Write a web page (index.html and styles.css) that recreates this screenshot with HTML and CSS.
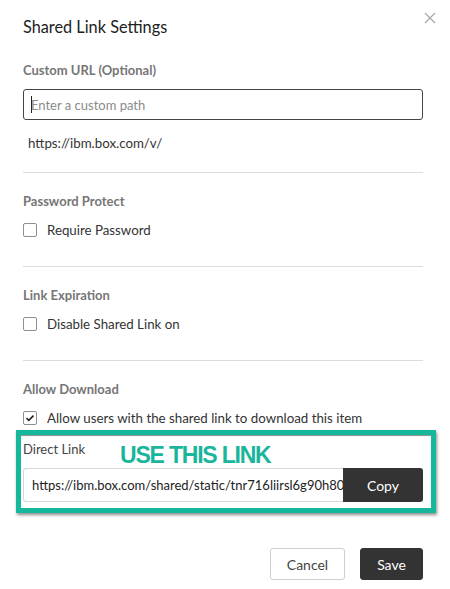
FILE: index.html
```html
<!DOCTYPE html>
<html>
<head>
<meta charset="utf-8">
<link rel="stylesheet" href="styles.css">
</head>
<body>
<div class="dialog">
  <h1 class="title">Shared Link Settings</h1>
  <button class="close" aria-label="Close">
    <svg width="12" height="12" viewBox="0 0 12 12"><path d="M1 1 L11 11 M11 1 L1 11" stroke="#a8a8a8" stroke-width="1.3" fill="none"/></svg>
  </button>

  <section class="section first">
    <div class="label">Custom URL (Optional)</div>
    <div class="text-input focused"><span class="caret"></span><span class="placeholder">Enter a custom path</span></div>
    <div class="prefix">https://ibm.box.com/v/</div>
  </section>

  <section class="section">
    <div class="label">Password Protect</div>
    <label class="check"><span class="box"></span><span>Require Password</span></label>
  </section>

  <section class="section">
    <div class="label">Link Expiration</div>
    <label class="check"><span class="box"></span><span>Disable Shared Link on</span></label>
  </section>

  <section class="section last">
    <div class="label">Allow Download</div>
    <label class="check"><span class="box checked"><svg width="10" height="8" viewBox="0 0 10 8"><path d="M1.5 4.2 L3.8 6.3 L8.5 1.6" stroke="#222" stroke-width="1.6" fill="none"/></svg></span><span>Allow users with the shared link to download this item</span></label>
  </section>

  <div class="highlight">
    <div class="direct-head">
      <span class="direct-label">Direct Link</span>
      <span class="callout">USE THIS LINK</span>
    </div>
    <div class="copy-row">
      <div class="link-field">https://ibm.box.com/shared/static/tnr716liirsl6g90h80</div>
      <button class="copy">Copy</button>
    </div>
  </div>

  <div class="footer">
    <button class="btn secondary">Cancel</button>
    <button class="btn primary">Save</button>
  </div>
</div>
</body>
</html>
```

FILE: styles.css
```css
* { box-sizing: border-box; }
html, body { margin: 0; padding: 0; background: #fff; }
body { font-family: Lato, "Open Sans", "Liberation Sans", sans-serif; color: #222; }

.dialog {
  position: relative;
  width: 450px;
  height: 589px;
  padding: 16px 27px 0 23px;
  overflow: hidden;
}

.title {
  margin: 0;
  font-size: 16.3px;
  line-height: 22px;
  font-weight: 400;
  color: #222;
}

.close {
  position: absolute;
  top: 12px;
  left: 424px;
  width: 12px;
  height: 12px;
  padding: 0;
  border: 0;
  background: none;
  display: flex;
}

.section {
  border-bottom: 1px solid #dcdcdc;
  padding-top: 20px;
  padding-bottom: 27px;
}
.section.first { padding-top: 24px; padding-bottom: 20px; }
.section.last { border-bottom: 0; padding-bottom: 0; }

.label {
  font-size: 13px;
  line-height: 16px;
  font-weight: 700;
  color: #767676;
}

.text-input {
  margin-top: 11px;
  height: 31px;
  border: 1px solid #444;
  border-radius: 3px;
  display: flex;
  align-items: center;
  padding-left: 7px;
  font-size: 13px;
  color: #8a8a8a;
}
.caret { width: 1px; height: 17px; background: #222; margin-right: -1px; }

.prefix {
  margin-top: 14px;
  padding-left: 5px;
  font-size: 13.3px;
  line-height: 18px;
  color: #333;
}

.check {
  margin-top: 12px;
  display: flex;
  align-items: center;
  gap: 10px;
  font-size: 13.3px;
  line-height: 18px;
  color: #333;
}
.box {
  width: 14px;
  height: 14px;
  border: 1px solid #8f8f8f;
  border-radius: 2px;
  display: flex;
  align-items: center;
  justify-content: center;
  flex: none;
}

.highlight {
  margin: 3px -13px 0 -7px;
  border: 5px solid #16b89c;
  padding: 6px 8px 6px 2px;
  box-shadow: 1px 2px 3px rgba(0,0,0,0.45), inset 0 2px 1px -1px rgba(0,0,0,0.45);
}

.direct-head {
  display: flex;
  align-items: flex-start;
  height: 27px;
}
.direct-label {
  font-size: 13px;
  line-height: 16px;
  color: #444;
  width: 97px;
}
.callout {
  font-family: "Liberation Sans", Arial, sans-serif;
  font-weight: 700;
  font-size: 23px;
  line-height: 26px;
  letter-spacing: -1.2px;
  color: #19b69c;
  margin-top: 1px;
}

.copy-row { display: flex; height: 34px; }
.link-field {
  flex: 1;
  min-width: 0;
  border: 1px solid #d8d8d8;
  border-right: 0;
  border-radius: 3px 0 0 3px;
  display: flex;
  align-items: center;
  padding-left: 8px;
  font-size: 13px;
  color: #222;
  white-space: nowrap;
  overflow: hidden;
}
.copy {
  width: 80px;
  flex: none;
  border: 0;
  border-radius: 0 3px 3px 0;
  background: #333;
  color: #fff;
  font-family: inherit;
  font-size: 14px;
}

.footer {
  margin-top: 35px;
  display: flex;
  justify-content: flex-end;
  gap: 15px;
}
.btn {
  height: 32px;
  border-radius: 3px;
  font-family: inherit;
  font-size: 14px;
  padding: 0;
}
.secondary { width: 75px; background: #fff; border: 1px solid #cfcfcf; color: #444; }
.primary { width: 63px; background: #333; border: 1px solid #333; color: #fff; }
```
